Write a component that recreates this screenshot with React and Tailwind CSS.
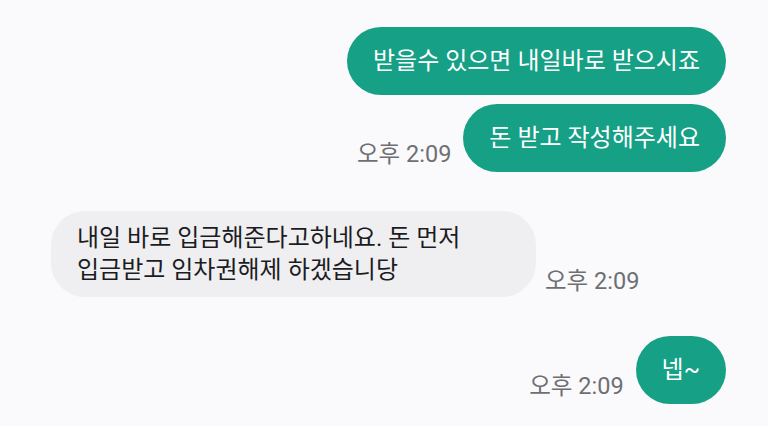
import React from 'react';

const font = "font-['Roboto','Noto_Sans_CJK_KR',sans-serif]";

// sent message, green bubble on the right
const Sent = ({ text, time, className = '' }) => (
  <div className={`flex justify-end items-end gap-[12px] pr-[42px] ${className}`}>
    {time && <span className="text-[23.5px] leading-[28px] text-[#6f6f73] mb-[4px] whitespace-nowrap">{time}</span>}
    <div className="bg-[#16a085] text-white text-[24px] leading-[30px] px-[26px] py-[19px] rounded-[34px] whitespace-nowrap">
      {text}
    </div>
  </div>
);

const Received = ({ lines, time, className = '' }) => (
  <div className={`flex items-end gap-[9px] pl-[51px] ${className}`}>
    <div className="w-[485px] bg-[#efeff1] text-[#1c1c1e] text-[24px] leading-[32px] px-[26px] py-[11px] rounded-[34px] whitespace-nowrap">
      {lines.map((l, i) => (
        <div key={i}>{l}</div>
      ))}
    </div>
    <span className="text-[23.5px] leading-[28px] text-[#6f6f73] mb-[2px] whitespace-nowrap">{time}</span>
  </div>
);

const App = () => {
  return (
    <div className={`w-[768px] h-[426px] overflow-hidden bg-[#fafafc] pt-[27px] flex flex-col ${font}`}>
      <Sent text="받을수 있으면 내일바로 받으시죠" />
      <Sent text="돈 받고 작성해주세요" time="오후 2:09" className="mt-[9px]" />
      <Received
        lines={['내일 바로 입금해준다고하네요. 돈 먼저', '입금받고 임차권해제 하겠습니당']}
        time="오후 2:09"
        className="mt-[39px]"
      />
      <Sent text="넵~" time="오후 2:09" className="mt-[39px]" />
    </div>
  );
};

export default App;
